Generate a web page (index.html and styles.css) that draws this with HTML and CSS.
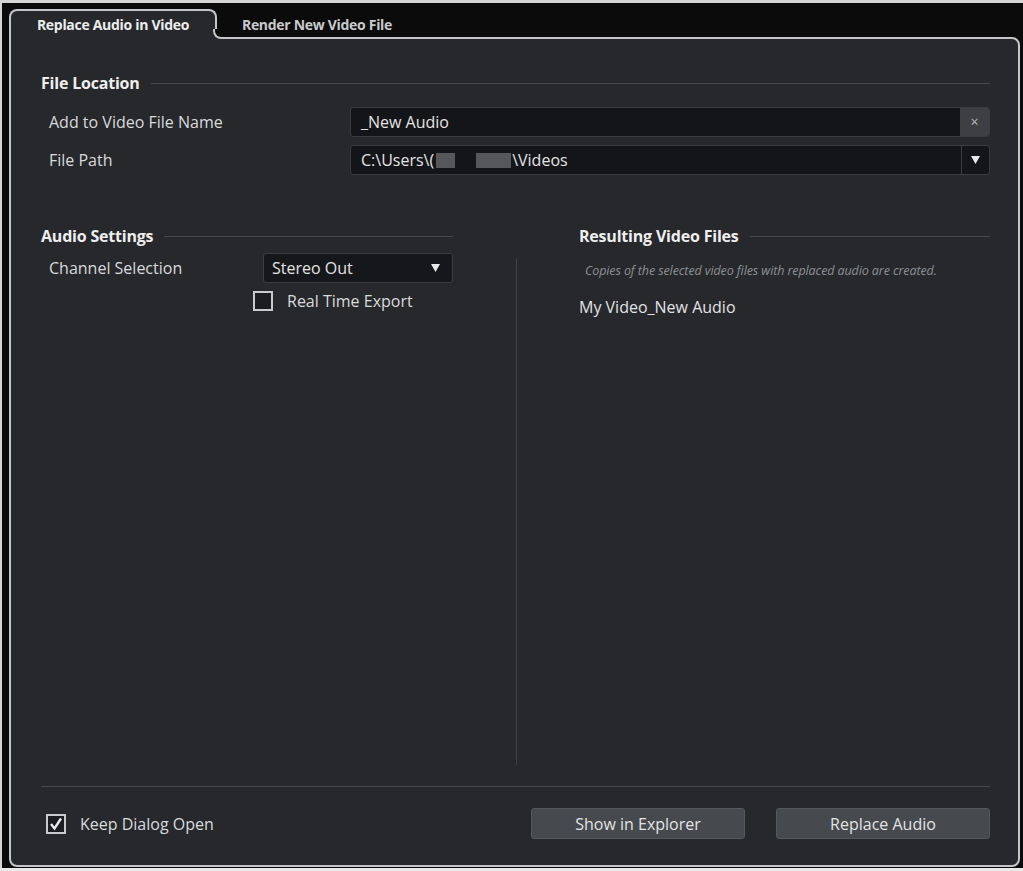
FILE: index.html
```html
<!DOCTYPE html>
<html lang="en">
<head>
  <meta charset="UTF-8" />
  <title>Replace Audio in Video</title>
  <link rel="stylesheet" href="styles.css">
</head>
<body>
  <div class="window">
    <div class="tabs">
      <div class="tab active">Replace Audio in Video</div>
      <div class="tab">Render New Video File</div>
    </div>

    <div class="panel">
      <div class="section-title"><span>File Location</span></div>

      <div class="row">
        <label class="label">Add to Video File Name</label>
        <div class="field">
          <span class="value">_New Audio</span>
          <span class="clear">&times;</span>
        </div>
      </div>

      <div class="row">
        <label class="label">File Path</label>
        <div class="field">
          <span class="value">C:\Users\(<span class="blur"><i></i><i></i></span>\Videos</span>
          <span class="drop">
            <svg width="9" height="8" viewBox="0 0 9 8"><path d="M0 0 H9 L4.5 8 Z" fill="#e8e8e8"/></svg>
          </span>
        </div>
      </div>

      <div class="columns">
        <div class="col">
          <div class="section-title"><span>Audio Settings</span></div>
          <div class="channel-row">
            <label class="label">Channel Selection</label>
            <div class="select">
              <span>Stereo Out</span>
              <svg width="9" height="8" viewBox="0 0 9 8"><path d="M0 0 H9 L4.5 8 Z" fill="#e8e8e8"/></svg>
            </div>
          </div>
          <label class="check realtime">
            <span class="box"></span> Real Time Export
          </label>
        </div>

        <div class="divider"></div>

        <div class="col">
          <div class="section-title"><span>Resulting Video Files</span></div>
          <p class="hint">Copies of the selected video files with replaced audio are created.</p>
          <div class="result">My Video_New Audio</div>
        </div>
      </div>

      <div class="footer">
        <label class="check">
          <span class="box">
            <svg width="14" height="14" viewBox="0 0 14 14"><path d="M2 7 L5.5 11.5 L12 1.5" fill="none" stroke="#eaeaea" stroke-width="2.4"/></svg>
          </span>
          Keep Dialog Open
        </label>
        <div class="buttons">
          <button>Show in Explorer</button>
          <button>Replace Audio</button>
        </div>
      </div>
    </div>
  </div>
</body>
</html>
```

FILE: styles.css
```css
body {
  margin: 0;
  background-color: #e9e9e9;
  font-family: "Open Sans", "Noto Sans", sans-serif;
  color: #d6d7d9;
}

.window {
  background-color: #0b0b0c;
  border-top: 3px solid #d4d4d4;
  border-left: 2px solid #d4d4d4;
  padding: 6px 0 0 7px;
  height: 868px;
  box-sizing: border-box;
}

/* tabs */
.tabs {
  display: flex;
  height: 30px;
  margin-bottom: -2px;
  position: relative;
  z-index: 1;
}

.tab {
  font-size: 14px;
  font-weight: bold;
  color: #c9cacc;
  line-height: 28px;
  text-align: center;
  letter-spacing: -0.3px;
  width: 200px;
  padding-top: 2px;
}

.tab.active {
  width: 208px;
  box-sizing: border-box;
  padding-top: 0;
  background-color: #26282c;
  color: #ececec;
  border: 2px solid #c4c6c9;
  border-bottom: none;
  border-radius: 8px 8px 0 0;
  position: relative;
}

/* rounded join between the active tab and the panel top edge */
.tab.active::before {
  content: "";
  position: absolute;
  left: 100%;
  margin-left: -2px;
  bottom: 0;
  width: 10px;
  height: 10px;
  background-color: #26282c;
  z-index: 1;
}

.tab.active::after {
  content: "";
  position: absolute;
  left: 100%;
  margin-left: -2px;
  bottom: 0;
  width: 10px;
  height: 10px;
  border-left: 2px solid #c4c6c9;
  border-bottom: 2px solid #c4c6c9;
  border-bottom-left-radius: 8px;
  background-color: #0b0b0c;
  box-sizing: border-box;
  z-index: 2;
}

/* main panel */
.panel {
  width: 1011px;
  height: 830px;
  box-sizing: border-box;
  background-color: #26282c;
  border: 2px solid #c4c6c9;
  border-radius: 0 8px 8px 8px;
  padding: 34px 28px 0 30px;
  display: flex;
  flex-direction: column;
}

.section-title {
  display: flex;
  align-items: center;
  gap: 11px;
  font-size: 16px;
  font-weight: bold;
  color: #eeeeee;
  line-height: 20px;
  letter-spacing: -0.2px;
}

.section-title::after {
  content: "";
  flex: 1;
  height: 1px;
  background-color: #46484c;
}

.label {
  font-size: 16px;
  color: #d9dadc;
}

.row {
  display: flex;
  align-items: center;
  padding-left: 8px;
  margin-top: 8px;
}

.section-title + .row {
  margin-top: 14px;
}

.row .label {
  width: 301px;
}

.field {
  flex: 1;
  height: 30px;
  box-sizing: border-box;
  background-color: #141518;
  border: 1px solid #3a3c41;
  border-radius: 3px;
  display: flex;
  align-items: stretch;
}

.value {
  flex: 1;
  padding-left: 10px;
  font-size: 16px;
  line-height: 28px;
  color: #e4e4e4;
}

.blur {
  display: inline-flex;
  gap: 21px;
  margin: -3px 1px 0 2px;
  vertical-align: middle;
}

.blur i {
  display: block;
  height: 15px;
  width: 19px;
  background-color: #55575b;
}

.blur i + i {
  width: 35px;
}

.clear {
  width: 29px;
  background-color: #3d3f43;
  color: #b9babc;
  font-size: 14px;
  text-align: center;
  line-height: 27px;
  border-radius: 0 2px 2px 0;
}

.drop {
  width: 27px;
  border-left: 1px solid #3a3c41;
  display: flex;
  align-items: center;
  justify-content: center;
}

/* columns */
.columns {
  display: grid;
  grid-template-columns: 412px 1fr 411px;
  margin-top: 51px;
  flex: 1;
}

.divider {
  width: 1px;
  background-color: #404246;
  justify-self: center;
  margin: 32px 0 21px;
}

.channel-row {
  display: flex;
  align-items: center;
  padding-left: 8px;
  margin-top: 7px;
}

.channel-row .label {
  width: 214px;
}

.select {
  flex: 1;
  height: 30px;
  box-sizing: border-box;
  background-color: #16171a;
  border: 1px solid #3a3c41;
  border-radius: 3px;
  display: flex;
  align-items: center;
  justify-content: space-between;
  padding: 0 12px 0 8px;
  font-size: 16px;
  color: #e4e4e4;
}

.check {
  display: flex;
  align-items: center;
  gap: 14px;
  font-size: 16px;
  color: #d9dadc;
}

.box {
  width: 20px;
  height: 20px;
  box-sizing: border-box;
  border: 2px solid #c9cacc;
  background-color: #1c1d20;
  display: flex;
  align-items: center;
  justify-content: center;
}

.realtime {
  margin: 7px 0 0 212px;
}

.hint {
  margin: 17px 0 0 6px;
  font-size: 12.5px;
  font-style: italic;
  color: #8e9094;
  line-height: 16px;
  letter-spacing: -0.1px;
}

.result {
  margin-top: 18px;
  font-size: 16px;
  line-height: 20px;
  color: #e2e3e5;
}

/* footer */
.footer {
  border-top: 1px solid #46484c;
  padding: 21px 0 26px 5px;
  display: flex;
  align-items: center;
  justify-content: space-between;
}

.buttons {
  display: flex;
  gap: 31px;
}

button {
  width: 214px;
  height: 31px;
  background-color: #46494d;
  border: 1px solid #54575b;
  border-radius: 3px;
  color: #e2e3e5;
  font-family: inherit;
  font-size: 16px;
}
```
